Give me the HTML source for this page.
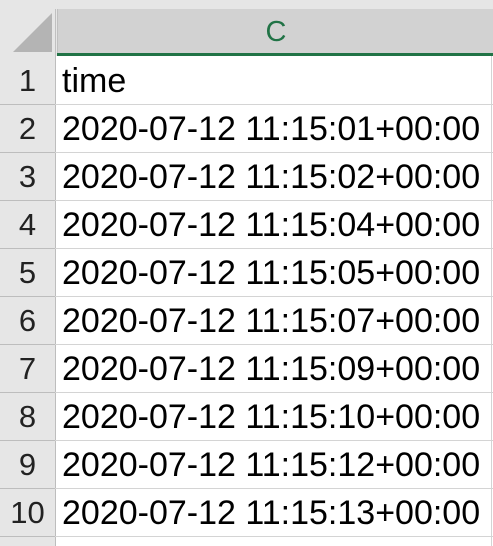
<!DOCTYPE html><html><head><style>
body{margin:0;width:493px;height:546px;background:#fff;overflow:hidden;font-family:"Liberation Sans",sans-serif;position:relative}
.top{position:absolute;left:0;top:0;width:493px;height:56px;background:#e6e6e6}
.hc{position:absolute;left:57px;top:9px;width:436px;height:44px;background:#d2d2d2;border-left:1px solid #c0c0c0}
.hc span{position:absolute;left:0;right:0;top:7px;text-align:center;font-size:29px;color:#217346}
.green{position:absolute;left:57px;top:53px;width:436px;height:3px;background:#217346}
.rn{position:absolute;left:0;top:56px;width:55px;height:490px;background:#e6e6e6;border-right:1px solid #bdbdbd}
.row{position:absolute;left:0;width:493px;height:48px;border-bottom:1px solid #d4d4d4}
.row .n{position:absolute;left:0;width:55px;text-align:center;top:7px;font-size:31px;color:#222;border-bottom:1px solid #bdbdbd;height:41px}
.row .c{position:absolute;left:62px;top:6px;font-size:34px;color:#000;white-space:nowrap}
.vr{position:absolute;left:491px;top:56px;width:1px;height:490px;background:#d4d4d4}
</style></head><body>
<div class="top"></div>
<svg style="position:absolute;left:0;top:0" width="57" height="56"><polygon points="52,13 52,52 13,52" fill="#b4b4b4"/><rect x="55" y="9" width="1" height="47" fill="#c0c0c0"/></svg>
<div class="hc"><span>C</span></div>
<div class="green"></div>
<div class="rn"></div>
<div class="vr"></div>
<div class="row" style="top:56px"><div class="n">1</div><div class="c">time</div></div>
<div class="row" style="top:104px"><div class="n">2</div><div class="c">2020-07-12 11:15:01+00:00</div></div>
<div class="row" style="top:152px"><div class="n">3</div><div class="c">2020-07-12 11:15:02+00:00</div></div>
<div class="row" style="top:200px"><div class="n">4</div><div class="c">2020-07-12 11:15:04+00:00</div></div>
<div class="row" style="top:248px"><div class="n">5</div><div class="c">2020-07-12 11:15:05+00:00</div></div>
<div class="row" style="top:296px"><div class="n">6</div><div class="c">2020-07-12 11:15:07+00:00</div></div>
<div class="row" style="top:344px"><div class="n">7</div><div class="c">2020-07-12 11:15:09+00:00</div></div>
<div class="row" style="top:392px"><div class="n">8</div><div class="c">2020-07-12 11:15:10+00:00</div></div>
<div class="row" style="top:440px"><div class="n">9</div><div class="c">2020-07-12 11:15:12+00:00</div></div>
<div class="row" style="top:488px"><div class="n">10</div><div class="c">2020-07-12 11:15:13+00:00</div></div>
</body></html>
